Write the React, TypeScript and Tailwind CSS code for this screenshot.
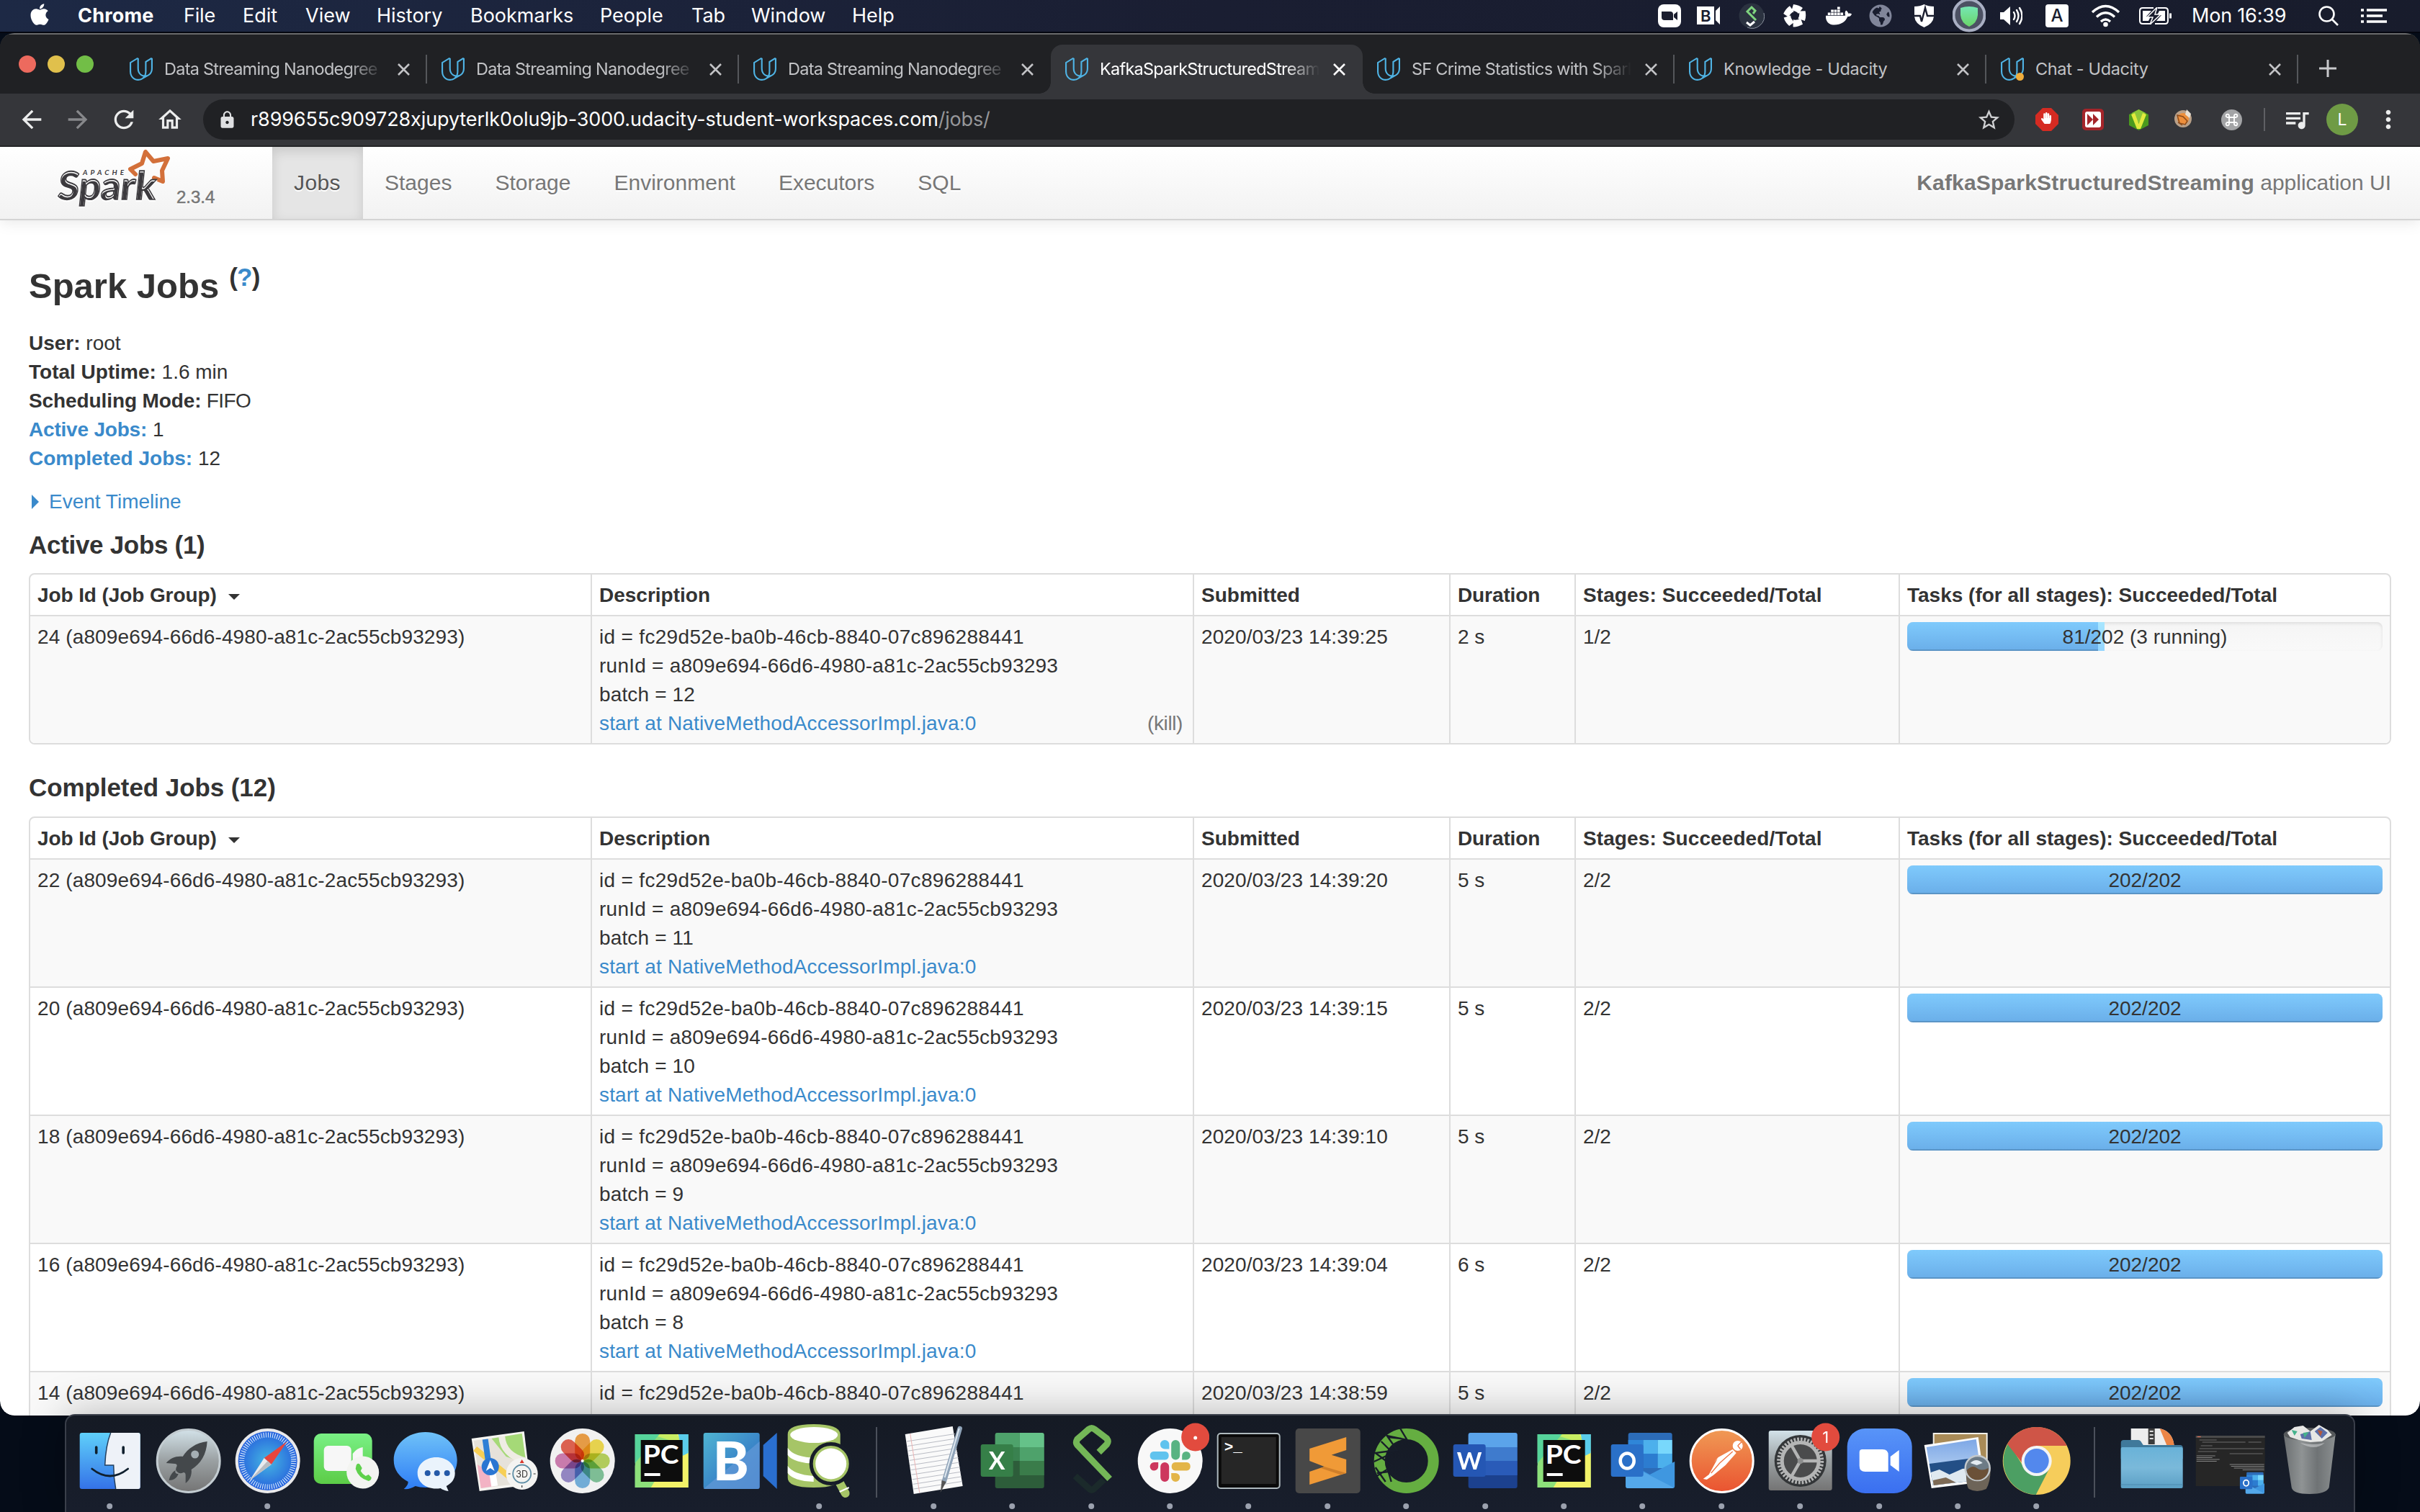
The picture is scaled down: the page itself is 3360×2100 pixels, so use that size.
import React from "react";
import { SiUdacity } from "react-icons/si";
import { FaApple, FaDocker, FaGlobeAmericas, FaHandPaper } from "react-icons/fa";
import {
  MdArrowBack,
  MdArrowForward,
  MdRefresh,
  MdOutlineHome,
  MdLock,
  MdStarBorder,
  MdQueueMusic,
  MdMoreVert,
} from "react-icons/md";

/* ---------- Menu bar ---------- */

const menuItems: [string, string][] = [
  ["File", "w-[82px] tracking-[-0.2px]"],
  ["Edit", "w-[87px]"],
  ["View", "w-[99px]"],
  ["History", "w-[130px]"],
  ["Bookmarks", "w-[180px]"],
  ["People", "w-[127px]"],
  ["Tab", "w-[83px]"],
  ["Window", "w-[140px]"],
  ["Help", "w-[80px]"],
];

function MenuBar() {
  return (
    <div className="flex h-[46px] shrink-0 items-center border-b-2 border-[#04060f] bg-gradient-to-r from-[#1d2945] via-[#1a1e32] to-[#181c2c] font-['Inter'] text-[27px] text-white">
      <FaApple className="-mt-1 ml-[38px] size-[34px]" />
      <span className="ml-[36px] w-[147px] font-bold tracking-[0.2px]">Chrome</span>
      {menuItems.map(([t, c]) => (
        <span key={t} className={c + " whitespace-nowrap"}>{t}</span>
      ))}
      <div className="ml-auto flex h-full items-center pr-[46px]">
        <svg className="h-8 w-8" viewBox="0 0 32 32">
          <rect width="32" height="32" rx="8" fill="#fff" />
          <path d="M5 10h12q4 0 4 4v8H9q-4 0-4-4z M22 14l5-4v12l-5-4z" fill="#1a1d2e" />
        </svg>
        <svg className="ml-[22px] h-8 w-8" viewBox="0 0 32 32">
          <path d="M0 3h24v25H0z M26 9l6-6v25l-6-6z" fill="#fff" />
          <text x="5" y="24" fontFamily="Inter" fontSize="22" fontWeight="600" fill="#1a1d2e">B</text>
        </svg>
        <svg className="ml-[26px] h-9 w-9" viewBox="0 0 36 36">
          <circle cx="18" cy="18" r="17.5" fill="#2b3240" />
          <path d="M12 34A17 17 0 0 0 35 14" fill="none" stroke="#8d94a0" strokeWidth="1" />
          <path d="M20 15l3-4-5-5-6 6 12 12" fill="none" stroke="#7fd47f" strokeWidth="3" />
          <path d="M11 27l5 4 6-5" fill="none" stroke="#fff" strokeWidth="3" />
        </svg>
        <svg className="ml-[26px] h-8 w-8" viewBox="0 0 32 32">
          <g fill="#fff">
            {[0, 72, 144, 216, 288].map((a) => (
              <path key={a} transform={`rotate(${a} 16 16)`} d="M14 0Q22 1 27 5L21 13Q18 9 11.500 8.500z" />
            ))}
          </g>
        </svg>
        <FaDocker className="ml-[27px] h-9 w-9 text-white" />
        <FaGlobeAmericas className="ml-6 h-8 w-8 text-[#81869a]" />
        <svg className="ml-[31px] h-8 w-[27px]" viewBox="0 0 27 32">
          <path d="M0 3Q8 3 13.500 0 19 3 27 3V17Q26 27 13.500 32 1 27 0 17z" fill="#fff" />
          <path d="M0 16h8l2 8 5-19 3 11h9" fill="none" stroke="#1a1d2e" strokeWidth="2.400" />
        </svg>
        <svg className="ml-[26px] h-[46px] w-[46px] shrink-0" viewBox="0 0 46 46">
          <circle cx="23" cy="22" r="21.500" fill="#4c5163" stroke="#a9afc3" strokeWidth="4" />
          <path d="M11 12q12-4 24 0v10q-1 11-12 16-11-5-12-16z" fill="url(#gShield)" />
        </svg>
        <svg className="ml-[19px] h-8 w-8" viewBox="0 0 32 32" fill="none" stroke="#fff" strokeWidth="2.400" strokeLinecap="round">
          <path d="M1 11h5l9-8v26l-9-8H1z" fill="#fff" stroke="none" />
          <path d="M20 11q3 5 0 10M24 8q5 8 0 16M28 5q7 11 0 22" />
        </svg>
        <span className="ml-8 flex h-8 w-8 items-center justify-center rounded-[4px] bg-white text-[24px] font-medium text-[#1a1d2e]">A</span>
        <svg className="ml-[31px] h-8 w-[41px]" viewBox="0 0 41 32" fill="none" stroke="#fff" strokeWidth="3.400">
          <path d="M2 11Q20.500-6 39 11M8 17.500Q20.500 6 33 17.500M14 24q6.500-6 13 0" />
          <circle cx="20.500" cy="28" r="1.600" fill="#fff" />
        </svg>
        <svg className="ml-[26px] h-6 w-[45px]" viewBox="0 0 45 24" fill="none" stroke="#fff" strokeWidth="2">
          <path d="M20 1H5Q1 1 1 5v14q0 4 4 4h12M26 1h10q4 0 4 4v14q0 4-4 4H22" />
          <path d="M43.500 8.500v7" strokeWidth="3" />
          <path d="M5 5h12l-7 8h6l-3 6H5zM36 19H24l7-8h-6l3-6h8z" fill="#fff" stroke="none" />
          <path d="M25 0L11 14h8l-4 10L30 10h-8z" fill="#1a1d2e" stroke="#fff" strokeWidth="1.500" />
        </svg>
        <span className="ml-7 w-[135px] whitespace-nowrap tracking-[-0.2px]">Mon 16:39</span>
        <svg className="ml-[41px] h-7 w-7" viewBox="0 0 28 28" fill="none" stroke="#fff" strokeWidth="2.600">
          <circle cx="11.500" cy="11.500" r="10" />
          <path d="M18.500 18.500L27 27" />
        </svg>
        <svg className="ml-[31px] h-5 w-9" viewBox="0 0 36 20" stroke="#fff" strokeWidth="3.400">
          <path d="M0 2h4M8 2h28M0 10h4M8 10h22M0 18h4M8 18h28" />
        </svg>
      </div>
    </div>
  );
}

/* ---------- Browser chrome ---------- */

function Close({ active }: { active?: boolean }) {
  return (
    <svg className={"h-[17px] w-[17px] shrink-0 " + (active ? "text-white" : "text-[#c2c3c6]")} viewBox="0 0 17 17" stroke="currentColor" strokeWidth="2.600">
      <path d="M1 1l15 15M16 1L1 16" />
    </svg>
  );
}

const tabs: { title: string; active?: boolean; sep?: boolean; badge?: boolean; fade?: boolean }[] = [
  { title: "Data Streaming Nanodegree", sep: true, fade: true },
  { title: "Data Streaming Nanodegree", sep: true, fade: true },
  { title: "Data Streaming Nanodegree", fade: true },
  { title: "KafkaSparkStructuredStreaming", active: true, fade: true },
  { title: "SF Crime Statistics with Spark", sep: true, fade: true },
  { title: "Knowledge - Udacity", sep: true },
  { title: "Chat - Udacity", sep: true, badge: true },
];

function TabStrip() {
  return (
    <div className="flex h-[82px] shrink-0 items-end bg-[#202124] font-['Inter']">
      <div className="flex h-[82px] w-[160px] shrink-0 gap-4 pt-[29px] pl-[26px]">
        <span className="size-6 rounded-full bg-[#ed6a5e]" />
        <span className="size-6 rounded-full bg-[#e0c04c]" />
        <span className="size-6 rounded-full bg-[#72be47]" />
      </div>
      {tabs.map((t, i) => (
        <div
          key={i}
          className={
            "relative flex h-[68px] w-[433px] shrink-0 items-center pl-5 " +
            (t.active ? "rounded-t-[16px] bg-[#35363a] text-white" : "text-[#c2c3c6]")
          }
        >
          {t.active && (
            <>
              <span className="absolute bottom-0 -left-4 size-4 bg-[radial-gradient(circle_at_0_0,transparent_15.5px,#35363a_16px)]" />
              <span className="absolute bottom-0 -right-4 size-4 bg-[radial-gradient(circle_at_100%_0,transparent_15.5px,#35363a_16px)]" />
            </>
          )}
          <span className="relative">
            <SiUdacity className="size-8 text-[#4fb3e4]" />
            {t.badge && <span className="absolute right-0 bottom-0 size-[11px] rounded-full bg-[#f0ad3c]" />}
          </span>
          <span
            className={
              "ml-4 w-[305px] overflow-hidden text-[23.500px] leading-[34px] whitespace-nowrap " +
              (t.fade
                ? "tracking-[-0.75px] [mask-image:linear-gradient(to_right,black_84%,transparent)]"
                : "tracking-[-0.35px]")
            }
          >
            {t.title}
          </span>
          <span className="ml-[19px] flex">
            <Close active={t.active} />
          </span>
          {t.sep && <span className="ml-auto h-10 w-[2px] bg-[#55575b]" />}
        </div>
      ))}
      <svg className="mb-[23px] ml-[29px] size-6" viewBox="0 0 24 24" stroke="#c8c9cc" strokeWidth="3">
        <path d="M12 0v24M0 12h24" />
      </svg>
    </div>
  );
}

function Toolbar() {
  return (
    <div className="flex h-[74px] shrink-0 items-center border-b-2 border-[#242527] bg-[#35363a] font-['Inter'] text-[#eceded]">
      <MdArrowBack className="ml-6 size-[40px] shrink-0" />
      <MdArrowForward className="ml-6 size-[40px] shrink-0 text-[#87888b]" />
      <MdRefresh className="ml-6 size-[40px] shrink-0" />
      <MdOutlineHome className="ml-[25px] size-[38px] shrink-0" />
      <div className="ml-[27px] flex h-14 w-[2515px] shrink-0 items-center rounded-full bg-[#202124] pr-[18px] pl-[20px]">
        <MdLock className="size-[27px] text-[#dfe0e2]" />
        <span className="ml-[19px] text-[27px] tracking-[-0.12px] text-white">r899655c909728xjupyterlk0olu9jb-3000.udacity-student-workspaces.com</span>
        <span className="text-[27px] tracking-[-0.2px] text-[#96979a]">/jobs/</span>
        <MdStarBorder className="ml-auto size-[35px] text-[#cfd0d2]" />
      </div>
      <svg className="ml-[29px] size-8 shrink-0" viewBox="0 0 32 32">
        <path d="M10 0h12l10 10v12L22 32H10L0 22V10z" fill="#d52b22" />
        <FaHandPaper x="7" y="6" width="18" height="20" color="#fff" />
      </svg>
      <svg className="ml-[33px] size-[30px] shrink-0" viewBox="0 0 30 30">
        <rect width="30" height="30" rx="5" fill="#a5252a" />
        <rect x="4" y="4" width="22" height="22" rx="3" fill="#fff" />
        <path d="M7 7l8 8-8 8zM15 7l8 8-8 8z" fill="#a5252a" />
      </svg>
      <svg className="ml-[34px] size-[29px] shrink-0" viewBox="0 0 29 29">
        <path d="M14.500 0L28 7v15l-13.500 7L1 22V7z" fill="#4b9a1e" />
        <path d="M14.500 0L24 5l-9.500 14L5 5z" fill="#8cc63a" />
        <path d="M4 7l5-2 5.500 15L20 5l5 2-8 20h-5z" fill="#e2ea3e" />
      </svg>
      <svg className="ml-[34px] size-[28px] shrink-0" viewBox="0 0 28 28">
        <circle cx="13" cy="13" r="12" fill="#b9a088" />
        <circle cx="13" cy="13" r="8" fill="#ee8f3c" />
        <path d="M18 0l6 6-2 6-6-5z" fill="#e8e0d4" />
        <path d="M5 8l8 2 6 6-3 5-8-2zM6 18l6 4" fill="none" stroke="#8a4b1c" strokeWidth="1.500" />
      </svg>
      <svg className="ml-[38px] size-[29px] shrink-0" viewBox="0 0 29 29">
        <circle cx="14.500" cy="14.500" r="14.500" fill="#a3a4a6" />
        <path d="M11 11h7v7h-7zM11 11H9a2.200 2.200 0 1 1 2-2zM18 11V9a2.200 2.200 0 1 1 2 2zM18 18h2a2.200 2.200 0 1 1-2 2zM11 18v2a2.200 2.200 0 1 1-2-2z" fill="none" stroke="#fff" strokeWidth="1.800" />
      </svg>
      <span className="ml-[30px] h-8 w-[2px] shrink-0 bg-[#5f6064]" />
      <MdQueueMusic className="ml-[24px] size-[40px] shrink-0" />
      <span className="ml-[21px] flex size-11 shrink-0 items-center justify-center rounded-full bg-[#6f9b45] text-[23px] text-white">L</span>
      <MdMoreVert className="ml-[22px] size-[40px] shrink-0" />
    </div>
  );
}

/* ---------- Spark UI ---------- */

function SparkLogo() {
  return (
    <svg className="h-[90px] w-[170px] shrink-0" viewBox="74 204 170 90">
      <path
        d="M214 247L226 252L225 237L233 220L213 224L202 211L197 227L181 235L188 242"
        fill="none"
        stroke="#d3703a"
        strokeWidth="6"
        strokeLinejoin="round"
        strokeLinecap="round"
      />
      <text transform="translate(79 277) skewX(-6)" fontFamily="Lato" fontSize="54" fontWeight="700" fill="#3c3a3e" stroke="#3c3a3e" strokeWidth="1.400" textLength="136" lengthAdjust="spacingAndGlyphs">Spark</text>
      <text x="115" y="243" fontFamily="Lato" fontSize="10" fontWeight="700" fontStyle="italic" fill="#3c3a3e" textLength="57">APACHE</text>
    </svg>
  );
}

function NavBar() {
  return (
    <div className="relative z-10 flex h-[102px] shrink-0 items-stretch border-b-2 border-[#d4d4d4] bg-gradient-to-b from-white to-[#f2f2f2] text-[30px] text-[#777] shadow-[0_2px_20px_rgba(0,0,0,0.1)] [text-shadow:0_2px_0_#fff]">
      <div className="flex w-[378px] shrink-0 items-start pl-[74px]">
        <SparkLogo />
        <span className="mt-[54px] ml-[1px] text-[24px] leading-8 [-webkit-text-stroke:0.500px_#777]">2.3.4</span>
      </div>
      <span className="flex w-[126px] items-center bg-[#e5e5e5] pl-[30px] tracking-[0.4px] text-[#555] shadow-[inset_0_6px_16px_rgba(0,0,0,0.125)]">Jobs</span>
      {["Stages", "Storage", "Environment", "Executors", "SQL"].map((t) => (
        <span key={t} className="flex items-center px-[30px]">{t}</span>
      ))}
      <span className="ml-auto flex items-center pr-10">
        <span className="whitespace-pre"><b className="tracking-[0.18px]">KafkaSparkStructuredStreaming</b> application UI</span>
      </span>
    </div>
  );
}

type Job = { id: number; batch: number; time: string; dur: string; stages: string; done: number; running: number; label: string; kill?: boolean; cut?: boolean };

const activeJobs: Job[] = [
  { id: 24, batch: 12, time: "2020/03/23 14:39:25", dur: "2 s", stages: "1/2", done: 81, running: 3, label: "81/202 (3 running)", kill: true },
];
const completedJobs: Job[] = [
  { id: 22, batch: 11, time: "2020/03/23 14:39:20", dur: "5 s", stages: "2/2", done: 202, running: 0, label: "202/202" },
  { id: 20, batch: 10, time: "2020/03/23 14:39:15", dur: "5 s", stages: "2/2", done: 202, running: 0, label: "202/202" },
  { id: 18, batch: 9, time: "2020/03/23 14:39:10", dur: "5 s", stages: "2/2", done: 202, running: 0, label: "202/202" },
  { id: 16, batch: 8, time: "2020/03/23 14:39:04", dur: "6 s", stages: "2/2", done: 202, running: 0, label: "202/202" },
  { id: 14, batch: 7, time: "2020/03/23 14:38:59", dur: "5 s", stages: "2/2", done: 202, running: 0, label: "202/202", cut: true },
];

const GRID = "grid grid-cols-[778px_836px_356px_174px_450px_682px]";

function Progress({ job }: { job: Job }) {
  return (
    <div className="relative -mt-px flex h-10 overflow-hidden rounded-lg bg-gradient-to-b from-[#f5f5f5] to-[#f9f9f9] shadow-[inset_0_2px_4px_rgba(0,0,0,0.1)]">
      <span
        className="h-full shrink-0 bg-gradient-to-b from-[#7fcafc] to-[#6aaee9] shadow-[inset_0_-2px_0_rgba(0,0,0,0.15)]"
        style={{ width: `${(job.done / 202) * 100}%` }}
      />
      <span className="h-full shrink-0 bg-gradient-to-b from-[#a8e6ff] to-[#94d6ff]" style={{ width: `${(job.running / 202) * 100}%` }} />
      <span className="absolute inset-0 text-center leading-[42px]">{job.label}</span>
    </div>
  );
}

function JobTable({ jobs }: { jobs: Job[] }) {
  const cell = "border-l-2 border-[#ddd] pt-[9px] pb-[7px] px-[10px] first:border-l-0";
  return (
    <div className="w-[3280px] overflow-hidden rounded-lg border-2 border-[#ddd]">
      <div className={GRID + " font-bold"}>
        <div className={cell + " flex items-center tracking-[-0.1px]"}>
          Job Id (Job Group)
          <svg className="mt-1 ml-[16px] h-2 w-4" viewBox="0 0 16 8"><path d="M0 0h16L8 8z" fill="#333" /></svg>
        </div>
        <div className={cell}>Description</div>
        <div className={cell}>Submitted</div>
        <div className={cell + " tracking-[-0.1px]"}>Duration</div>
        <div className={cell + " tracking-[0.1px]"}>Stages: Succeeded/Total</div>
        <div className={cell}>Tasks (for all stages): Succeeded/Total</div>
      </div>
      {jobs.map((j, i) => (
        <div key={j.id} className={GRID + " border-t-2 border-[#ddd] " + (i % 2 === 0 ? "bg-[#f9f9f9]" : "bg-white")}>
          <div className={cell + " tracking-[0.12px]"}>{j.id} (a809e694-66d6-4980-a81c-2ac55cb93293)</div>
          <div className={cell}>
            <div className="tracking-[0.32px]">id = fc29d52e-ba0b-46cb-8840-07c896288441</div>
            <div className="tracking-[0.24px]">runId = a809e694-66d6-4980-a81c-2ac55cb93293</div>
            {!j.cut && (
              <>
                <div className="tracking-[0.15px]">batch = {j.batch}</div>
                <div className="flex justify-between">
                  <a className="tracking-[0.17px] text-[#3a8acb]">start at NativeMethodAccessorImpl.java:0</a>
                  {j.kill && <span className="pr-1 tracking-[-0.4px] text-[#777]">(kill)</span>}
                </div>
              </>
            )}
          </div>
          <div className={cell + " tracking-[0.1px]"}>{j.time}</div>
          <div className={cell}>{j.dur}</div>
          <div className={cell}>{j.stages}</div>
          <div className={cell}><Progress job={j} /></div>
        </div>
      ))}
    </div>
  );
}

function SparkPage() {
  return (
    <div className="flex min-h-0 flex-1 flex-col overflow-hidden rounded-b-[20px] bg-white font-['Liberation_Sans'] text-[28px] leading-10 text-[#333]">
      <NavBar />
      <div className="px-10 pt-[51px]">
        <h3 className="flex h-20 items-center text-[49px] font-bold">
          Spark Jobs
          <span className="-mt-[24px] ml-[14px] text-[35px] tracking-[-0.8px]">(<span className="text-[#3a8acb]">?</span>)</span>
        </h3>
        <ul className="mt-5">
          <li><b>User:</b> root</li>
          <li><b>Total Uptime:</b> 1.6 min</li>
          <li><b className="tracking-[-0.1px]">Scheduling Mode:</b><span className="tracking-[-0.6px]"> FIFO</span></li>
          <li><b className="tracking-[-0.2px] text-[#3a8acb]">Active Jobs:</b> 1</li>
          <li><b className="text-[#3a8acb]">Completed Jobs:</b> 12</li>
        </ul>
        <div className="mt-5 flex items-center text-[#3a8acb]">
          <svg className="ml-1 h-[20px] w-[10px]" viewBox="0 0 10 20"><path d="M0 0l10 10-10 10z" fill="#3a8acb" /></svg>
          <span className="ml-[14px]">Event Timeline</span>
        </div>
        <h4 className="mt-5 mb-[19px] text-[35px] font-bold tracking-[-0.3px]">Active Jobs (1)</h4>
        <JobTable jobs={activeJobs} />
        <h4 className="mt-10 mb-5 text-[35px] font-bold tracking-[-0.08px]">Completed Jobs (12)</h4>
        <JobTable jobs={completedJobs} />
      </div>
    </div>
  );
}

/* ---------- Dock icons, each on a 110 x 134 canvas ---------- */

const Badge = ({ text }: { text?: string }) => (
  <g>
    <circle cx="90" cy="30" r="19.500" fill="#e24b3e" />
    {text ? (
      <text x="90" y="38" textAnchor="middle" fontFamily="Inter" fontSize="22" fill="#fff">{text}</text>
    ) : (
      <circle cx="90" cy="31" r="2.500" fill="#fff" />
    )}
  </g>
);

const Finder = () => (
  <g>
    <rect x="13" y="24" width="84" height="78" rx="3" fill="url(#gFinder)" />
    <path d="M56 24H94q3 0 3 3V99q0 3-3 3H63Q60 86 60 69H48Q49 42 56 24z" fill="#eef2f8" />
    <path d="M56 24Q49 42 48 69H60Q60 86 63 102" fill="none" stroke="#24405f" strokeWidth="1.500" />
    <path d="M36 44v8M73.500 44v8" stroke="#10202e" strokeWidth="3.600" strokeLinecap="round" />
    <path d="M30 74Q55 94 80 74" fill="none" stroke="#10202e" strokeWidth="2.800" strokeLinecap="round" />
  </g>
);
const Launchpad = () => (
  <g>
    <circle cx="55" cy="63" r="43.500" fill="url(#gGrey)" stroke="#c3ccd1" strokeWidth="3" />
    <path d="M81 36C65 38 54 46 47 57 38 56 30 59 24 66l12 1q3 0 3 3-3 5 0 8 4 4 9 1 3 0 3 4v11C57 90 60 82 59 75 72 67 80 54 81 36z" fill="#44484b" />
    <path d="M37 76c-5 3-8 8-9 14 6 0 11-3 13-9-4 0-5-2-4-5z" fill="#44484b" />
    <circle cx="64" cy="54" r="5.500" fill="#a5afb4" />
  </g>
);
const Safari = () => (
  <g>
    <circle cx="55" cy="63" r="45" fill="#e9e9ea" />
    <circle cx="55" cy="63" r="41" fill="url(#gSafari)" />
    <circle cx="55" cy="63" r="36" fill="none" stroke="#e4f1ff" strokeWidth="7" strokeDasharray="1 2.142" />
    <path d="M82 36L50 59l10 9z" fill="#e8453c" />
    <path d="M30 90L50 59l10 9z" fill="#e9ecef" />
    <path d="M30 90L55 63l5 5z" fill="#b9bdc2" />
  </g>
);
const FaceTime = () => (
  <g>
    <rect x="10" y="25" width="81" height="70" rx="10" fill="url(#gGreen)" />
    <rect x="24" y="42" width="38" height="35" rx="6" fill="#f7f7f7" />
    <path d="M64 53q6-8 14-9v20H64z" fill="#f7f7f7" />
    <circle cx="78" cy="79" r="22.500" fill="#f3f4f1" />
    <path d="M69 69q2-4 5-1l3 5-2 4q3 5 7 7l4-2 4 4q0 4-4 5-14-4-18-17z" fill="#5fd14c" />
  </g>
);
const Messages = () => (
  <g>
    <path d="M55 23c25 0 44 17 44 39S80 100 55 100q-8 0-14-2-8 5-16 4 6-5 6-10C18 85 11 75 11 62 11 40 30 23 55 23z" fill="url(#gMsg)" />
    <path d="M70 58c15 0 26 10 26 22 0 9-5 14-12 18l3 7q-7-1-11-4C58 104 44 94 44 80c0-12 11-22 26-22z" fill="#eaf3fc" />
    <g fill="#2459a8"><circle cx="58" cy="80" r="4" /><circle cx="71" cy="80" r="4" /><circle cx="85" cy="80" r="4" /></g>
  </g>
);
const Maps = () => (
  <g>
    <path d="M10 32L83 22 92 96 21 105z" fill="#f6f5f1" />
    <path d="M13 35L80 25 89 93 23 101z" fill="#e6e2da" />
    <path d="M38 32l42-7 6 42-28-10z" fill="#a5d977" />
    <path d="M52 29q2 26 33 34" fill="none" stroke="#efece4" strokeWidth="9" />
    <path d="M15 46l45 37 22-6" fill="none" stroke="#f7cf55" strokeWidth="8" />
    <path d="M18 68l20 12 4 18-19 3z" fill="#f3b3c4" />
    <path d="M36 60l6 38" stroke="#fff" strokeWidth="9" />
    <path d="M29 33l5 36" stroke="#2f7fd6" strokeWidth="8" />
    <circle cx="36" cy="71" r="12" fill="#2a76d2" />
    <path d="M36 62l6 15-6-4-6 4z" fill="#fff" />
    <circle cx="80" cy="81" r="22" fill="#f4f4f2" />
    <circle cx="80" cy="81" r="12.500" fill="none" stroke="#5e8ea6" strokeWidth="1.800" />
    <path d="M80 61l3 5h-6z" fill="#d9372b" />
    <path d="M61 81h3M96 81h3M80 97v3" stroke="#333" strokeWidth="1.200" />
    <text x="80" y="86" textAnchor="middle" fontFamily="Inter" fontSize="12.500" fill="#333">3D</text>
  </g>
);
const petals = ["#f29a36", "#f3dc3f", "#b4d350", "#78c294", "#6aaee0", "#9082c6", "#cf74ae", "#e65540"];
const Photos = () => (
  <g>
    <circle cx="55" cy="63" r="45" fill="#f1f1f1" />
    {petals.map((c, i) => (
      <rect key={c} x="44.500" y="25" width="21" height="37" rx="10.500" fill={c} fillOpacity="0.900" transform={`rotate(${i * 45} 55 63)`} className="mix-blend-multiply" />
    ))}
    <circle cx="55" cy="63" r="2" fill="#fff" />
  </g>
);
const PyCharm = () => (
  <g>
    <rect x="18" y="26" width="74" height="74" fill="#7bdc8c" />
    <path d="M60 26H80L92 50V100H32z" fill="#f2f268" />
    <path d="M18 70L30 26H62L74 44 40 100H18z" fill="#8de07a" />
    <path d="M40 26H76L84 40z" fill="#c8ee62" />
    <path d="M18 26h34L18 66z" fill="#56d49b" />
    <path d="M78 26h14v26l-8 4z" fill="#5accea" />
    <rect x="26" y="34" width="58" height="58" fill="#0d0d0d" />
    <text x="29" y="67" fontFamily="Lato" fontSize="36" fontWeight="700" fill="#fff" textLength="50" lengthAdjust="spacingAndGlyphs">PC</text>
    <rect x="31" y="80" width="22" height="4" fill="#fff" />
  </g>
);
const BlueB = () => (
  <g>
    <rect x="4" y="24" width="78" height="78" rx="3" fill="url(#gB)" />
    <path d="M4 102L82 36V99q0 3-3 3z" fill="#5f97d6" opacity="0.800" />
    <path d="M87 41l19-17v78L87 84z" fill="#2a6fd0" />
    <text x="17" y="90" fontFamily="Lato" fontSize="74" fontWeight="900" fill="#fff" textLength="50" lengthAdjust="spacingAndGlyphs">B</text>
  </g>
);
const DbSearch = () => (
  <g>
    <path d="M11 26Q11 12 47 12T84 26V86Q84 100 47 100T11 86z" fill="#a6c567" />
    <ellipse cx="47.500" cy="27" rx="33" ry="11" fill="#fff" />
    <path d="M11 45q8 13 40 14v8Q19 66 11 55zM11 70q8 12 36 14v8Q19 91 11 80z" fill="#fff" />
    <path d="M76 80l15 28" stroke="#a6c567" strokeWidth="12" strokeLinecap="round" />
    <path d="M77 92l14-6M83 106l13-6" stroke="#fff" strokeWidth="2" />
    <circle cx="71" cy="67" r="27.500" fill="#a6c567" stroke="#171d29" strokeWidth="5" />
    <circle cx="71" cy="67" r="21.500" fill="#fff" />
  </g>
);
const TextEdit = () => (
  <g>
    <path d="M15 26L81 15 95 98 27 109z" fill="#fafafa" />
    {[0, 1, 2, 3, 4, 5, 6, 7, 8, 9, 10].map((i) => (
      <path key={i} d={`M${17 + i * 1} ${36 + i * 6.6}l67-10.500`} stroke="#b9bcc4" strokeWidth="1" />
    ))}
    <path d="M22 25l13 82" stroke="#eab4b4" strokeWidth="1" />
    <path d="M91 18L69 92" stroke="#8fa3b8" strokeWidth="6.500" strokeLinecap="round" />
    <path d="M90 18L70 86" stroke="#dfe8f0" strokeWidth="2" />
    <path d="M66 90l6 2-8 15z" fill="#555" />
  </g>
);
const Excel = () => (
  <g>
    <rect x="31" y="24" width="68" height="77" rx="3" fill="#2d5d3a" />
    <path d="M34 24h31v20H31V27q0-3 3-3z" fill="#4ea26b" />
    <path d="M65 24h31q3 0 3 3v17H65z" fill="#65c289" />
    <path d="M31 44h34v19H31z" fill="#3a8250" /><path d="M65 44h34v19H65z" fill="#4ea26b" />
    <path d="M31 63h34v20H31z" fill="#2d5d3a" /><path d="M65 63h34v20H65z" fill="#3a7c4a" />
    <rect x="11" y="40" width="45" height="45" rx="3" fill="#367f48" />
    <text x="33.500" y="75" textAnchor="middle" fontFamily="Lato" fontSize="34" fontWeight="700" fill="#fff">X</text>
  </g>
);
const GreenS = () => (
  <g fill="none" strokeWidth="9">
    <path d="M65 51L76 40Q79 36 76 32L59 19Q55 16 51 19L35 33Q32 38 36 42L80 88" stroke="#74b757" />
    <path d="M32 84l20 18q3 3 6 0l14-13" stroke="#1b2a2b" />
  </g>
);
const Slack = () => (
  <g>
    <circle cx="55" cy="63" r="45" fill="#f8f8f8" />
    <path d="M47.500 34a6.200 6.200 0 0 1 6.200 6.200V46.500H47.500a6.200 6.200 0 0 1 0-12.500zM32 50H48a5.800 5.800 0 0 1 0 11.500H32A5.800 5.800 0 0 1 32 50z" fill="#60c3ee" />
    <path d="M56.500 40a6 6 0 0 1 12 0V55.500a6 6 0 0 1-12 0zM71.500 61.500V55.700A5.800 5.800 0 1 1 77.300 61.500z" fill="#59b382" />
    <path d="M62 65H78a5.800 5.800 0 0 1 0 11.500H62A5.800 5.800 0 0 1 62 65zM56.500 80H62.500a6 6 0 1 1-6 6z" fill="#e3b549" />
    <path d="M41.500 71a6 6 0 0 1 12 0V86a6 6 0 0 1-12 0zM38.500 65V70.700A5.800 5.800 0 1 1 32.700 65z" fill="#cd375e" />
    <Badge />
  </g>
);
const Terminal = () => (
  <g>
    <rect x="12" y="25" width="86" height="76" rx="4" fill="#0a0a0a" stroke="#aeb9be" strokeWidth="2" />
    <rect x="17" y="30" width="76" height="65" fill="#262626" />
    <text x="21" y="50" fontFamily="Liberation Mono" fontSize="21" fontWeight="700" fill="#fff">&gt;_</text>
  </g>
);
const Sublime = () => (
  <g>
    <rect x="10" y="18" width="90" height="90" rx="5" fill="#484848" />
    <path d="M80.500 30V48L60 54.700 80.500 61V80L29.500 96V78L50 71 29.500 63V46z" fill="#f09a37" />
    <path d="M50 71L80.500 80 72 82 45 73z" fill="#cf7f2a" />
  </g>
);
const Anaconda = () => (
  <g>
    <circle cx="55" cy="63" r="37.500" fill="none" stroke="#65ae41" strokeWidth="15" />
    <path d="M14 84l22-14-24-18 30-4-14-20 28 6-12-20M10 64l26-12M20 36l14 14M30 30l18 2M12 72l14 20M34 92l-4-14-16 2" fill="none" stroke="#171d29" strokeWidth="2.400" />
  </g>
);
const Word = () => (
  <g>
    <rect x="31" y="24" width="68" height="77" rx="3" fill="#1c418e" />
    <path d="M34 24h62q3 0 3 3v17H31V27q0-3 3-3z" fill="#5ba4ea" />
    <path d="M31 44h68v19H31z" fill="#3f7bcd" /><path d="M31 63h68v20H31z" fill="#2a5bb8" />
    <rect x="10" y="40" width="45" height="45" rx="3" fill="#2557b4" />
    <text x="32.500" y="75" textAnchor="middle" fontFamily="Lato" fontSize="33" fontWeight="700" fill="#fff">W</text>
  </g>
);
const OutlookMark = () => (
  <g>
    <rect x="35" y="24" width="61" height="60" rx="3" fill="#2c6cb8" />
    <path d="M35 34h21v19H35z" fill="#2f86d8" /><path d="M56 34h20v19H56z" fill="#4cb0ec" /><path d="M76 34h20v19H76z" fill="#78d8fc" />
    <path d="M56 53h20v20H56z" fill="#2c7cd0" /><path d="M76 53h20v20H76z" fill="#4cb0ec" />
    <path d="M99.500 64V98q0 3-3 3H34.500q-3 0-3-3V64L65 82z" fill="#3f97e0" />
    <path d="M31.500 66L98 100q-1 1-3 1H34.500q-3 0-3-3z" fill="#54a8ea" />
    <rect x="11" y="40" width="45" height="45" rx="3" fill="#2a70c8" />
    <ellipse cx="33.500" cy="63" rx="9.500" ry="10.500" fill="none" stroke="#fff" strokeWidth="4.600" />
  </g>
);
const Postman = () => (
  <g>
    <circle cx="55" cy="63" r="43.500" fill="url(#gPost)" stroke="#fff" strokeWidth="3" />
    <circle cx="77" cy="42" r="7" fill="#fff" />
    <path d="M77 42l5-5M77 42l4 5" stroke="#ee7342" strokeWidth="1.300" />
    <path d="M70 47l5 5L60 69 43 83l-9 6-5-1 8-6 12-22-5 5 6-7z" fill="#fff" />
    <path d="M70 50L52 66 40 80" fill="none" stroke="#ee7342" strokeWidth="1.300" />
  </g>
);
const SysPref = () => (
  <g>
    <rect x="11" y="21" width="88" height="83" rx="3" fill="url(#gGrey)" />
    <circle cx="55" cy="63" r="36" fill="#333638" />
    <circle cx="55" cy="63" r="30" fill="none" stroke="#b4b5b5" strokeWidth="5" strokeDasharray="2.700 2.013" />
    <circle cx="55" cy="63" r="25.500" fill="#4a4b4c" stroke="#b4b5b5" strokeWidth="5" />
    <path d="M55 63H79M55 63L43 42M55 63L43 84" stroke="#b4b5b5" strokeWidth="4.500" />
    <circle cx="55" cy="63" r="4" fill="#8d8e8e" />
    <Badge text="1" />
  </g>
);
const Zoom = () => (
  <g>
    <rect x="10" y="18" width="90" height="90" rx="25" fill="url(#gZoom)" />
    <path d="M31 47H59q8 0 8 8V78H35q-8 0-8-8V51q0-4 4-4zM70 57l12-9V78L70 69z" fill="#fff" />
  </g>
);
const Preview = () => (
  <g>
    <rect x="20" y="24" width="76" height="60" fill="#f3f1ea" />
    <rect x="22" y="26" width="72" height="56" fill="#a98b57" />
    <path d="M8 41L83 30 92 92 18 101z" fill="#fbfbfb" />
    <path d="M11 44L80 33 88 89 20 97z" fill="url(#gSky)" />
    <path d="M15 67l69-9 4 31-68 8z" fill="#234f86" />
    <path d="M17 79l12-4 14 7 18-8 24-2 3 17-68 8z" fill="#dfe9f0" />
    <path d="M20 90l18-4 14 7-31 4z" fill="#7d6a55" />
    <path d="M66 76q0 22 4 26 11 6 24 0 6-10 6-28z" fill="#6d6458" />
    <circle cx="82" cy="73" r="17" fill="#6d7b86" stroke="#c3c8cb" strokeWidth="2.500" />
    <path d="M67 76q8-8 14-3t16 0a15 15 0 0 1-30 3z" fill="#6b5138" />
    <path d="M72 66q8-8 17 0l-8 3z" fill="#e4ecf2" />
  </g>
);
const ChromeIcon = () => (
  <g>
    <circle cx="55" cy="63" r="47" fill="#f6cd5b" />
    <path d="M16 38A47 47 0 0 0 54 110L73 73 36 70z" fill="#4c9f63" />
    <path d="M14.300 39.500A47 47 0 0 1 97 42H55L35 66z" fill="#cf5547" />
    <circle cx="55" cy="63" r="21" fill="#f4f4f4" />
    <circle cx="55" cy="63" r="17" fill="#5388ed" />
  </g>
);
const Folder = () => (
  <g>
    <path d="M26 18h40q18 4 20 24H26z" fill="#ededed" />
    <path d="M66 18q18 4 20 24H76z" fill="#ec8546" />
    <path d="M50 18h9v22h-9z" fill="#3c3c3c" /><path d="M52 22h5M52 27h5M52 32h5" stroke="#ddd" strokeWidth="2" />
    <path d="M12 38q0-4 4-4H36q3 0 5 4l2 3H94q4 0 4 4V60H12z" fill="#3f799b" />
    <rect x="12" y="44" width="86" height="57" rx="2" fill="url(#gFolder)" />
    <path d="M12 96h86" stroke="#4c8bb0" strokeWidth="1" />
  </g>
);
const MailWindow = () => (
  <g>
    <rect x="7" y="28" width="96" height="70" fill="#262626" />
    <rect x="7" y="28" width="96" height="3" fill="#4a4a4a" />
    <path d="M9 29.500h5" stroke="#d96a55" strokeWidth="1.200" />
    <path d="M12 34h24M16 37h60M80 37h18M14 42h16M12 46h90M10 50h26M54 53h46" stroke="#6b6b6b" strokeWidth="1" />
    <path d="M8 56h26M8 58.500h22M8 61h32M8 63.500h28M54 68h48M56 70.500h46M60 73h42M72 75.500h30" stroke="#8e8e8e" strokeWidth="0.900" />
    <g transform="translate(64 69.500) scale(0.385)"><OutlookMark /></g>
  </g>
);
const Trash = () => (
  <g>
    <path d="M19 26L30 100q2 9 25 9t27-9L91 26z" fill="url(#gTrash)" />
    <ellipse cx="55" cy="26" rx="36" ry="9" fill="#55585a" />
    <path d="M24 24l10-8 12-2 10 8 12-9 12 7 6 7-14 9-16 1-16-3-12-4z" fill="#e7e7e5" />
    <path d="M42 26l14-4 2 12-14-2zM62 22l8-6 10 8-8 8z" fill="#5c6fa8" />
    <path d="M46 24l8-1-6 8zM30 20l8 2-4 6z" fill="#45b28c" /><path d="M66 20l7 2-3 7z" fill="#b5593c" />
    <path d="M42 38q18 4 34 0-14 12-34 0z" fill="#c9cccd" opacity="0.600" />
  </g>
);

const groupA: [() => React.ReactElement, boolean][] = [
  [Finder, true], [Launchpad, false], [Safari, true], [FaceTime, false], [Messages, false],
  [Maps, false], [Photos, false], [PyCharm, false], [BlueB, false], [DbSearch, true],
];
const groupB: [() => React.ReactElement, boolean][] = [
  [TextEdit, true], [Excel, true], [GreenS, true], [Slack, true], [Terminal, true],
  [Sublime, true], [Anaconda, true], [Word, true], [PyCharm, true], [OutlookMark, true],
  [Postman, true], [SysPref, true], [Zoom, true], [Preview, true], [ChromeIcon, true],
];
const groupC: [() => React.ReactElement, boolean][] = [[Folder, false], [MailWindow, false], [Trash, false]];

function DockGroup({ items }: { items: [() => React.ReactElement, boolean][] }) {
  return (
    <>
      {items.map(([Icon, running], i) => (
        <svg key={i} className="h-[134px] w-[109.400px] shrink-0" viewBox="0 0 110 134" preserveAspectRatio="xMidYMin slice">
          <Icon />
          {running && <circle cx="54.500" cy="126" r="4" fill="#9ba1ae" />}
        </svg>
      ))}
    </>
  );
}

const Grad = ({ id, stops }: { id: string; stops: string[] }) => (
  <linearGradient id={id} x1="0" y1="0" x2="0" y2="1">
    {stops.map((c, i) => <stop key={i} offset={i / (stops.length - 1)} stopColor={c} />)}
  </linearGradient>
);

function Dock() {
  return (
    <div className="flex h-[136px] shrink-0 justify-center">
      <svg className="absolute size-0">
        <defs>
          <Grad id="gShield" stops={["#76e6b4", "#6ad468"]} />
          <Grad id="gFinder" stops={["#5fd0fa", "#3472e8"]} />
          <Grad id="gGrey" stops={["#d3e2e9", "#9aa0a2", "#747474"]} />
          <radialGradient id="gSafari"><stop offset="0" stopColor="#45b7e2" /><stop offset="1" stopColor="#2763dd" /></radialGradient>
          <Grad id="gGreen" stops={["#79f085", "#5ccc47"]} />
          <Grad id="gMsg" stops={["#6fc2f8", "#2e7df6"]} />
          <linearGradient id="gB" x1="0" y1="0" x2="1" y2="1"><stop offset="0" stopColor="#4fb4d2" /><stop offset="1" stopColor="#2a62c0" /></linearGradient>
          <Grad id="gPost" stops={["#f09a55", "#ea5330"]} />
          <Grad id="gZoom" stops={["#5894f8", "#3a6ff0"]} />
          <Grad id="gSky" stops={["#7da7e6", "#c9dff5"]} />
          <Grad id="gFolder" stops={["#69b2d8", "#7ab9da", "#5b9fc4"]} />
          <linearGradient id="gTrash" x1="0" y1="0" x2="1" y2="0"><stop offset="0" stopColor="#6c7072" /><stop offset="0.350" stopColor="#8f9394" /><stop offset="0.650" stopColor="#6f7375" /><stop offset="1" stopColor="#8b8f90" /></linearGradient>
        </defs>
      </svg>
      <div className="relative z-20 flex h-[136px] w-[3180px] items-start rounded-t-[14px] border-2 border-b-0 border-[#3a3f4a] bg-gradient-to-b from-[#151a24] to-[#181e2c] pl-[6px] shadow-[0_0_60px_rgba(0,0,0,0.28)]">
        <DockGroup items={groupA} />
        <span className="mx-6 mt-4 h-[98px] w-[2px] shrink-0 bg-[#4b505b]" />
        <DockGroup items={groupB} />
        <span className="mx-6 mt-4 h-[98px] w-[2px] shrink-0 bg-[#4b505b]" />
        <DockGroup items={groupC} />
      </div>
    </div>
  );
}

export default function App() {
  return (
    <div className="flex h-[2100px] w-[3360px] flex-col overflow-hidden bg-[#050c18]">
      <MenuBar />
      <div className="-mb-[2px] flex h-[1920px] shrink-0 flex-col overflow-hidden rounded-[20px]">
        <div className="flex shrink-0 flex-col rounded-t-[18px] border-t-2 border-[#6a6b6c] bg-[#202124]">
          <TabStrip />
          <Toolbar />
        </div>
        <SparkPage />
      </div>
      <Dock />
    </div>
  );
}
